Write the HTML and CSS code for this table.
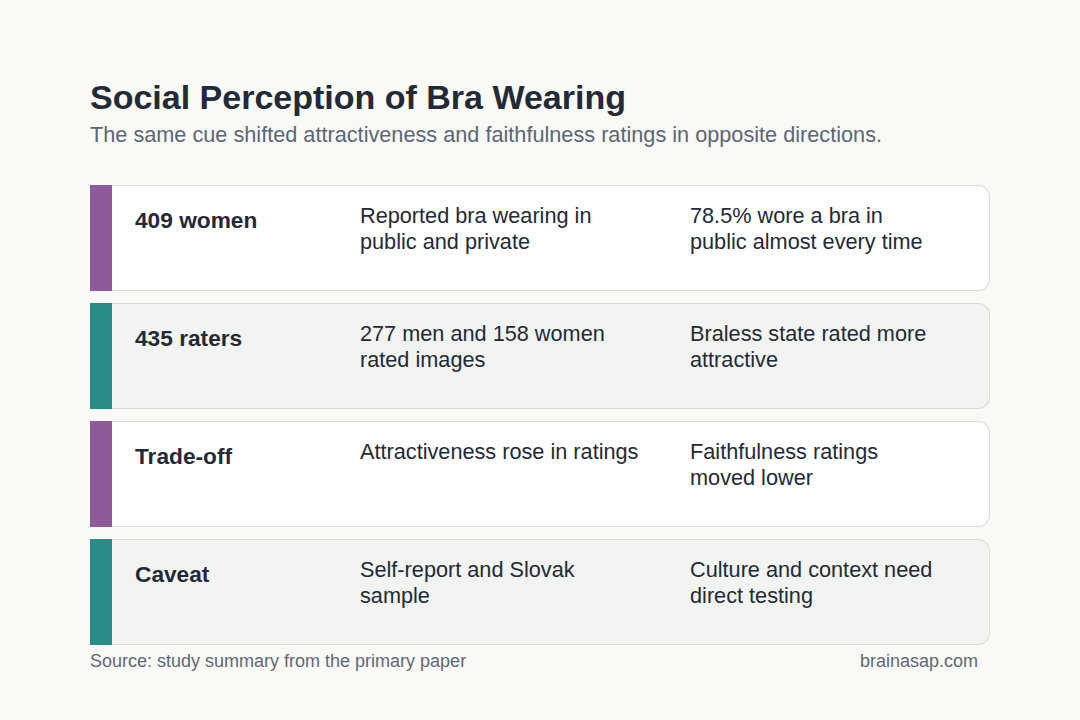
FILE: index.html
```html
<!DOCTYPE html>
<html lang="en">
<head>
<meta charset="utf-8">
<title>Social Perception of Bra Wearing</title>
<link rel="stylesheet" href="styles.css">
</head>
<body>
<main class="page">
  <h1 class="title">Social Perception of Bra Wearing</h1>
  <p class="subtitle">The same cue shifted attractiveness and faithfulness ratings in opposite directions.</p>
  <section class="rows">
    <div class="row">
      <div class="bar bar-purple"></div>
      <div class="card">
        <div class="label">409 women</div>
        <div class="cell">Reported bra wearing in public and private</div>
        <div class="cell">78.5% wore a bra in public almost every time</div>
      </div>
    </div>
    <div class="row alt">
      <div class="bar bar-teal"></div>
      <div class="card">
        <div class="label">435 raters</div>
        <div class="cell">277 men and 158 women rated images</div>
        <div class="cell">Braless state rated more attractive</div>
      </div>
    </div>
    <div class="row">
      <div class="bar bar-purple"></div>
      <div class="card">
        <div class="label">Trade-off</div>
        <div class="cell">Attractiveness rose in ratings</div>
        <div class="cell">Faithfulness ratings moved lower</div>
      </div>
    </div>
    <div class="row alt">
      <div class="bar bar-teal"></div>
      <div class="card">
        <div class="label">Caveat</div>
        <div class="cell">Self-report and Slovak sample</div>
        <div class="cell">Culture and context need direct testing</div>
      </div>
    </div>
  </section>
  <footer class="footer">
    <span>Source: study summary from the primary paper</span>
    <span>brainasap.com</span>
  </footer>
</main>
</body>
</html>
```

FILE: styles.css
```css
* { box-sizing: border-box; }
html, body {
  margin: 0;
  padding: 0;
  background: #f9faf6;
}
body {
  font-family: "Liberation Sans", Arial, sans-serif;
  color: #232a36;
}
.page {
  padding: 77px 90px 0 90px;
  width: 1080px;
}
.title {
  margin: 0;
  font-size: 34px;
  line-height: 40px;
  font-weight: 700;
  color: #232a36;
}
.subtitle {
  margin: 5px 0 0 0;
  font-size: 21.7px;
  line-height: 26px;
  color: #5b6676;
}
.rows {
  margin-top: 37px;
  display: flex;
  flex-direction: column;
  gap: 12px;
}
.row {
  display: flex;
  height: 106px;
}
.bar {
  width: 22px;
  flex: none;
}
.bar-purple { background: #8e5a9b; }
.bar-teal { background: #2a8c87; }
.card {
  flex: 1;
  display: grid;
  grid-template-columns: 225px 330px 1fr;
  align-items: start;
  background: #ffffff;
  border: 1px solid #d9dbd7;
  border-left: none;
  border-radius: 0 12px 12px 0;
  padding: 17px 4px 0 23px;
}
.alt .card { background: #f2f4f1; }
.label {
  font-size: 22.7px;
  line-height: 26px;
  font-weight: 700;
  margin-top: 3.5px;
  padding-right: 20px;
}
.cell {
  font-size: 21.7px;
  line-height: 26px;
  padding-right: 47px;
}
.footer {
  margin-top: 5px;
  display: flex;
  justify-content: space-between;
  padding-right: 12px;
  font-size: 18px;
  line-height: 22px;
  color: #5f6875;
}
```
